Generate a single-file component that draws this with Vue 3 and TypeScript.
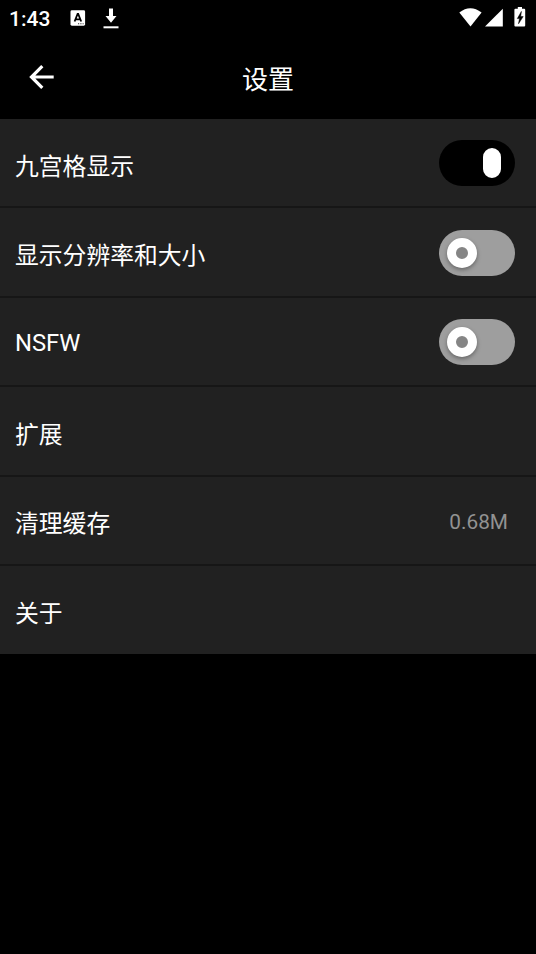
<script setup lang="ts">
import { ref } from 'vue'

interface SettingRow {
  id: string
  label: string
  kind: 'switch' | 'value' | 'link'
  on?: boolean
  value?: string
}

const rows = ref<SettingRow[]>([
  { id: 'grid', label: '九宫格显示', kind: 'switch', on: true },
  { id: 'resolution', label: '显示分辨率和大小', kind: 'switch', on: false },
  { id: 'nsfw', label: 'NSFW', kind: 'switch', on: false },
  { id: 'extensions', label: '扩展', kind: 'link' },
  { id: 'cache', label: '清理缓存', kind: 'value', value: '0.68M' },
  { id: 'about', label: '关于', kind: 'link' },
])

function activate(row: SettingRow): void {
  if (row.kind === 'switch') row.on = !row.on
}
</script>

<template>
  <div class="screen">
    <div class="status">
      <span class="clock">1:43</span>
      <svg class="input-icon" width="16" height="16" viewBox="0 0 16 16">
        <rect x="0.5" y="0.3" width="14.6" height="15.4" rx="1.4" fill="#fff" />
        <path d="M4.6 11.5 7.6 4h.6l3 7.5M5.7 9.3h4.4" fill="none" stroke="#000" stroke-width="1.8" />
        <path d="M8 13.8h1.2M10.3 13.8h1.2M12.6 13.8h1" stroke="#333" stroke-width="1.1" />
      </svg>
      <svg class="download-icon" width="16" height="21" viewBox="0 0 16 21">
        <path d="M6 0.5h4V8h3.5L8 14.8 2.5 8H6z" fill="#fff" />
        <rect x="0.5" y="18.3" width="15" height="2" fill="#fff" />
      </svg>
      <span class="spacer"></span>
      <svg class="signals" width="68" height="20" viewBox="0 0 68 20">
        <path d="M0.3 4.6Q11.3-4 22.6 4.6L11.5 18.4z" fill="#fff" />
        <path d="M26 18.6 43.8 0.8V18.6z" fill="#fff" />
        <path d="M58.8-1h4.2v1.8h2.2q1 0 1 1v15.800q0 1-1 1h-8.800q-1 0-1-1V1.800q0-1 1-1h2.400z" fill="#fff" />
        <path d="M62.4 3.4 58.3 10.6h2.2l-1 5.2 4.7-7.2h-2.5z" fill="#000" stroke="#000" stroke-width="0.5" />
      </svg>
    </div>

    <header class="bar">
      <button class="back" aria-label="返回">
        <svg width="26" height="26" viewBox="0 0 26 26">
          <path d="M24.7 13H3M13.3 2.2 2.5 13l10.8 10.8" fill="none" stroke="#fff" stroke-width="3.2" />
        </svg>
      </button>
      <h1 class="title">设置</h1>
    </header>

    <main class="list">
      <div v-for="row in rows" :key="row.id" class="row" @click="activate(row)">
        <span class="label" :class="{ latin: row.id === 'nsfw' }">{{ row.label }}</span>
        <span v-if="row.kind === 'switch'" class="track" :class="{ on: row.on }" role="switch" :aria-checked="row.on">
          <span class="thumb"></span>
        </span>
        <span v-else-if="row.kind === 'value'" class="value">{{ row.value }}</span>
      </div>
    </main>
  </div>
</template>

<style>
body {
  background: #000;
}
</style>

<style scoped>
.screen {
  box-sizing: border-box;
  width: 100%;
  height: 954px;
  background: #000;
  color: #fff;
  font-family: Roboto, 'Noto Sans CJK SC', sans-serif;
}
.status {
  display: flex;
  align-items: flex-start;
  height: 37px;
  padding: 0 9px;
  box-sizing: border-box;
}
.clock {
  width: 61px;
  padding-top: 7px;
  font-size: 21px;
  font-weight: 500;
  line-height: 24px;
}
.input-icon {
  margin-top: 10px;
}
.download-icon {
  margin: 8px 0 0 17px;
}
.spacer {
  flex: 1;
}
.signals {
  margin-top: 8px;
  overflow: visible;
}
.bar {
  display: grid;
  grid-template-columns: 82px 1fr 82px;
  align-items: center;
  height: 82px;
}
.back {
  display: flex;
  width: 26px;
  margin: 0 0 3px 29px;
  padding: 0;
  border: 0;
  background: none;
}
.title {
  margin: 0;
  padding-top: 3px;
  font-size: 26px;
  font-weight: 400;
  line-height: 36px;
  text-align: center;
}
.list {
  background: #212121;
}
.row {
  display: flex;
  align-items: center;
  justify-content: space-between;
  box-sizing: border-box;
  height: 89.4px;
  padding: 1px 21px 0 15px;
  border-bottom: 2px solid #161616;
}
.row:last-child {
  height: 88px;
  border-bottom: 0;
}
.label {
  padding-top: 7px;
  font-size: 23.8px;
  line-height: 34px;
}
.label.latin {
  padding-top: 2px;
}
.track {
  display: flex;
  align-items: center;
  box-sizing: border-box;
  width: 76px;
  height: 46px;
  padding: 0 8px;
  border-radius: 23px;
  background: #9e9e9e;
}
.thumb {
  box-sizing: border-box;
  width: 30px;
  height: 30px;
  border: 9px solid #fff;
  border-radius: 15px;
  background: #858585;
  box-shadow: 0 2px 4px rgba(0, 0, 0, 0.35);
}
.track.on {
  justify-content: flex-end;
  padding-right: 14px;
  background: #000;
}
.track.on .thumb {
  width: 18px;
  border-radius: 9px;
  background: #fff;
}
.value {
  margin-right: 7px;
  padding-top: 3px;
  color: #929292;
  font-size: 20.8px;
  line-height: 28px;
}
</style>
